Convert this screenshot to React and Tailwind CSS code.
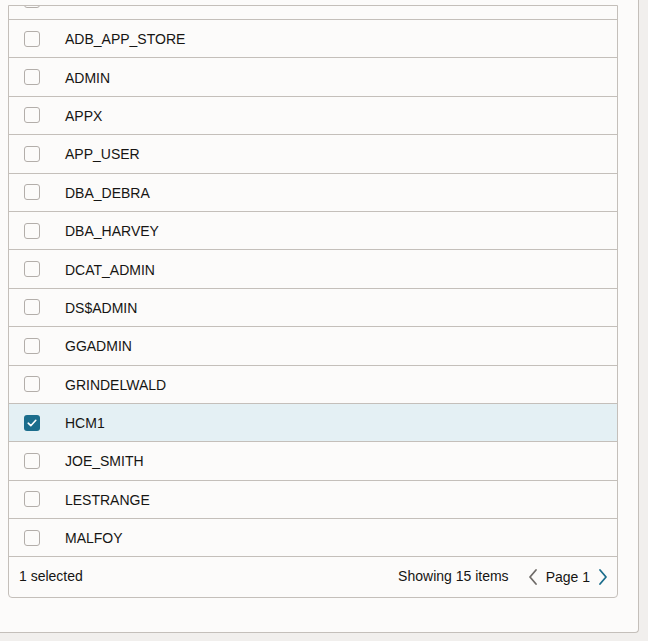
import React from 'react';

const users = [
  'ADB_APP_STORE',
  'ADMIN',
  'APPX',
  'APP_USER',
  'DBA_DEBRA',
  'DBA_HARVEY',
  'DCAT_ADMIN',
  'DS$ADMIN',
  'GGADMIN',
  'GRINDELWALD',
  'HCM1',
  'JOE_SMITH',
  'LESTRANGE',
  'MALFOY',
];

const Checkbox = ({ checked }) => (
  checked ? (
    <span className="w-4 h-4 rounded-[3px] bg-[#1b6d8c] flex items-center justify-center">
      <svg width="12" height="12" viewBox="0 0 12 12" fill="none">
        <path d="M2.2 6.2 L4.8 8.7 L9.8 3.3" stroke="white" strokeWidth="1.6" strokeLinecap="round" strokeLinejoin="round" />
      </svg>
    </span>
  ) : (
    <span className="w-4 h-4 rounded-[3px] border border-[#b3aeaa] bg-[#fcfbfa]" />
  )
);

const Row = ({ name, selected, className = '' }) => (
  <div className={`flex items-center h-[38.4px] border-b border-[#c4bfba] ${selected ? 'bg-[#e4f0f4]' : ''} ${className}`}>
    <div className="w-[56px] pl-[15px] flex items-center">
      <Checkbox checked={selected} />
    </div>
    <span className="pt-[2px] text-[14px] text-[#161513]">{name}</span>
  </div>
);

export default function App() {
  return (
    <div className="min-h-screen bg-[#f1efed]" style={{ fontFamily: '"Liberation Sans", Arial, sans-serif' }}>
      <div className="w-[639px] h-[633px] bg-[#fcfbfa] border-r border-b border-[#c4bfba] rounded-br-[4px] pl-[8px] pt-[5px]">
        <div className="w-[610px] border border-[#c4bfba] rounded-b-[4px] bg-[#fcfbfa]">
          <div className="overflow-hidden">
            <Row name="" className="-mt-[24.4px]" />
            {users.map((u) => (
              <Row key={u} name={u} selected={u === 'HCM1'} />
            ))}
          </div>
          <div className="h-[40px] flex items-center justify-between pl-[10px] pr-[8px] text-[14px] text-[#161513]">
            <span className="-mt-[2px]">1 selected</span>
            <div className="flex items-center">
              <span className="-mt-[2px] mr-[18px]">Showing 15 items</span>
              <svg width="12" height="18" viewBox="0 0 12 18" fill="none">
                <path d="M9 2 L3 9 L9 16" stroke="#6f6b68" strokeWidth="1.8" strokeLinecap="round" strokeLinejoin="round" />
              </svg>
              <span className="ml-[7px] mr-[7px]">Page 1</span>
              <svg width="12" height="18" viewBox="0 0 12 18" fill="none">
                <path d="M3 2 L9 9 L3 16" stroke="#1b6d8c" strokeWidth="1.8" strokeLinecap="round" strokeLinejoin="round" />
              </svg>
            </div>
          </div>
        </div>
      </div>
    </div>
  );
}
